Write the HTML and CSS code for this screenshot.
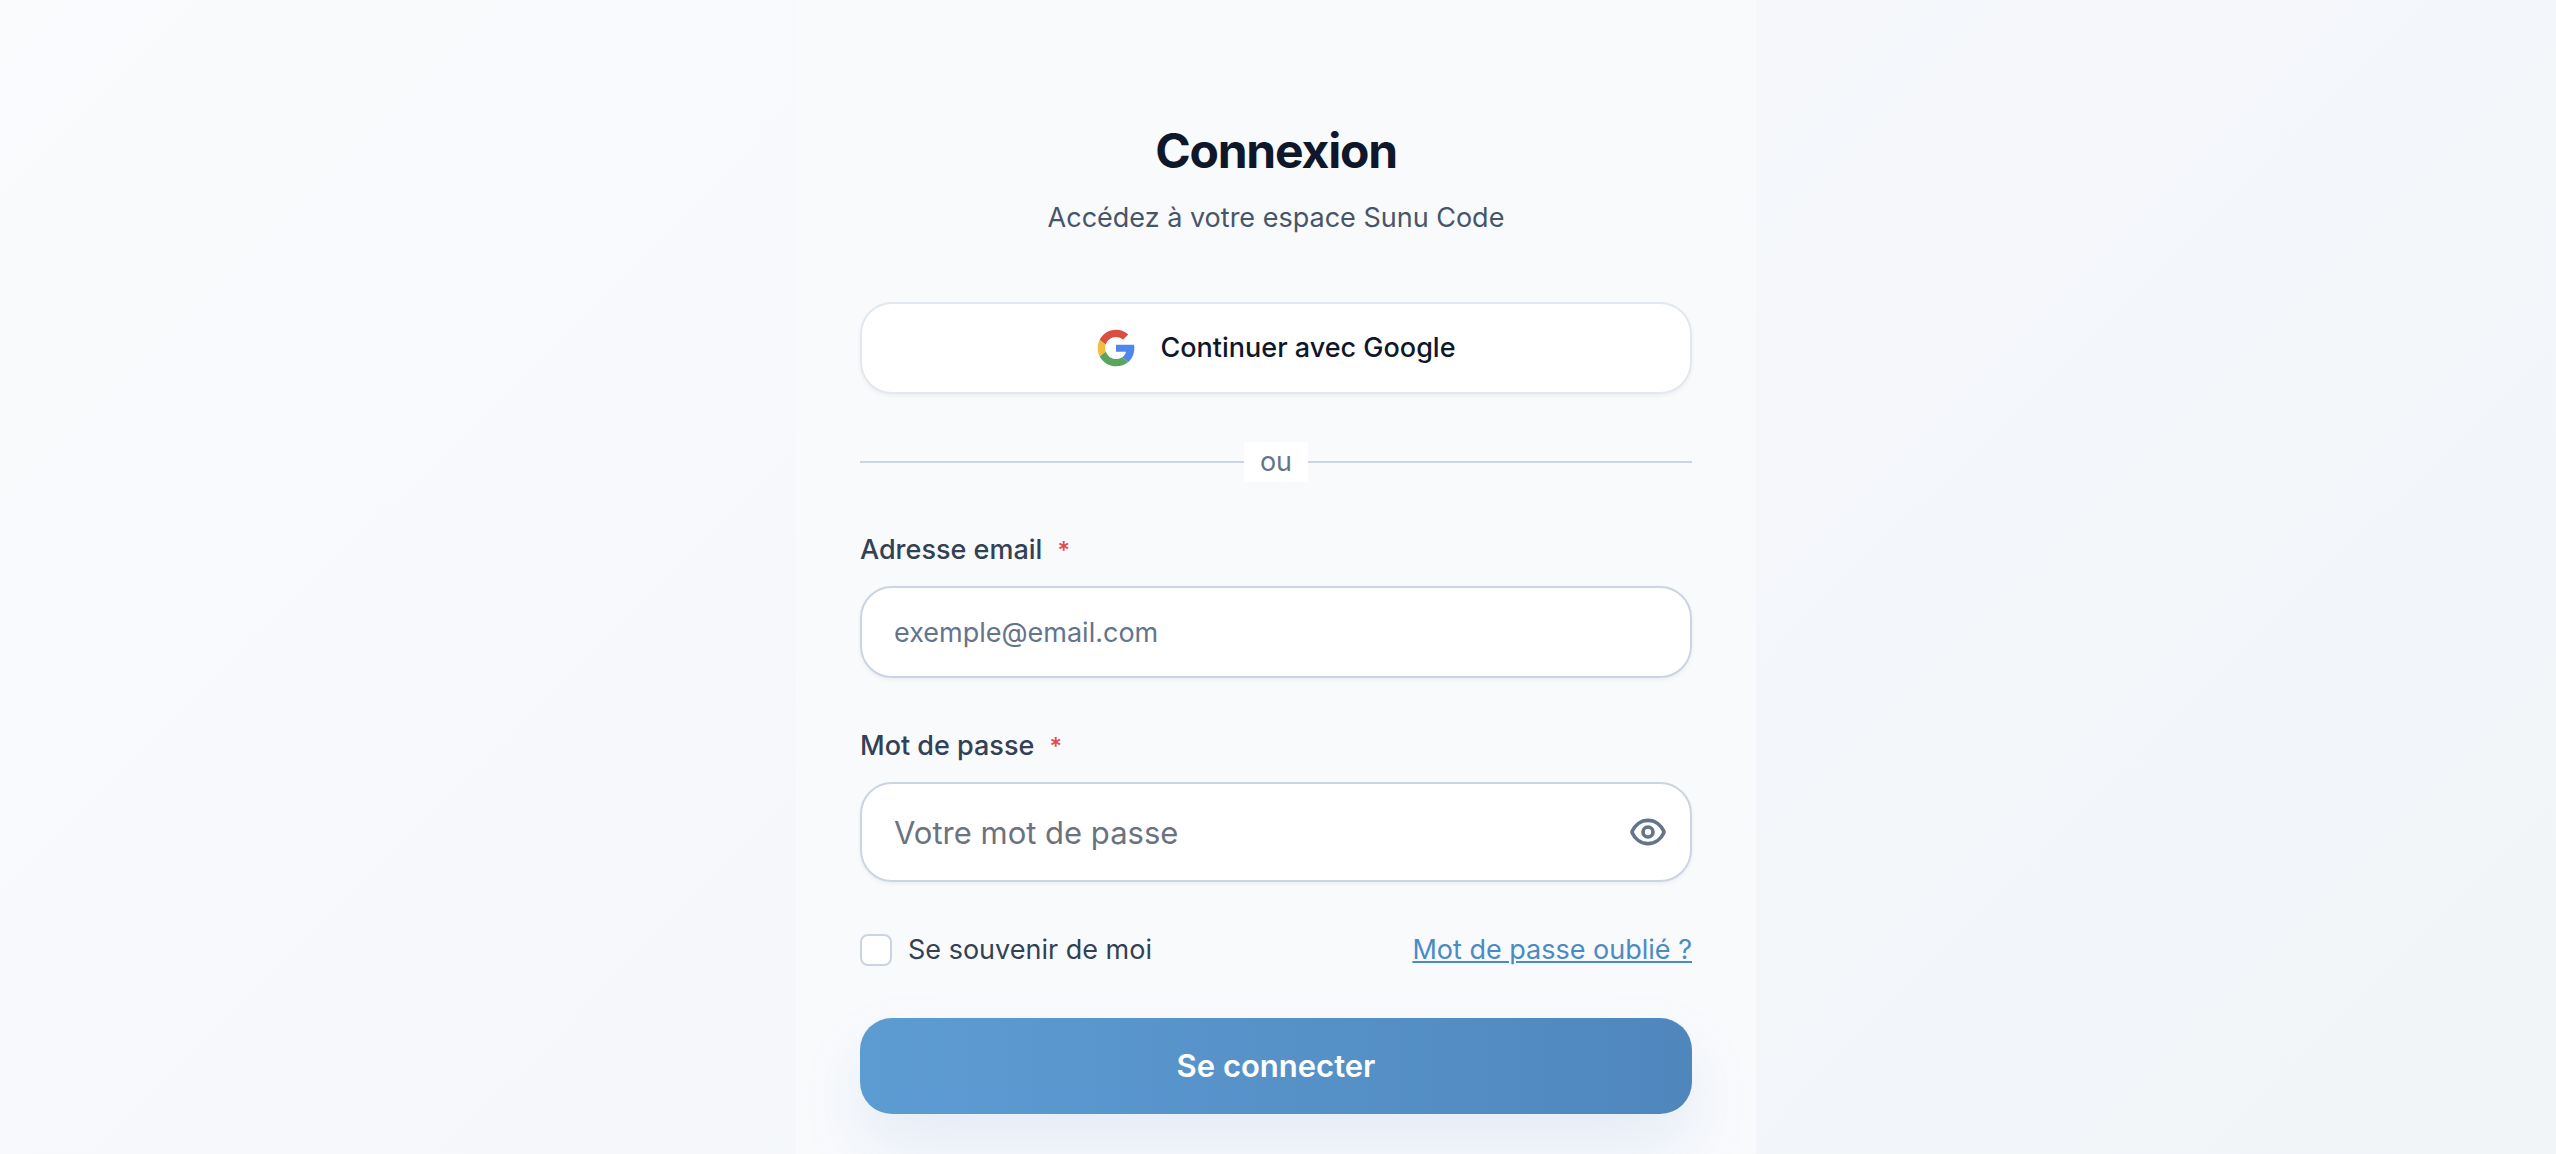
FILE: index.html
```html
<!DOCTYPE html>
<html lang="fr">
<head>
    <meta charset="UTF-8">
    <meta name="viewport" content="width=device-width, initial-scale=1.0">
    <title>Connexion - Sunu Code</title>
    <link rel="stylesheet" href="styles.css">
</head>
<body>
    <main class="login-page">
        <section class="login-panel">
            <header class="login-header">
                <h1>Connexion</h1>
                <p>Accédez à votre espace Sunu Code</p>
            </header>

            <button type="button" class="google-btn">
                <svg class="google-icon" viewBox="0 0 24 24" aria-hidden="true">
                    <path fill="#5087ec" d="M22.8 10c.1.6.2 1.3.2 2.1 0 3.4-1.3 6.3-3.6 8.3l-3.7-2.8c1.2-.8 2-1.9 2.3-3.3H12V10z"/>
                    <path fill="#58a55c" d="M12 23c2.97 0 5.46-.98 7.4-2.6l-3.69-2.83c-.98.66-2.23 1.06-3.71 1.06-2.86 0-5.29-1.93-6.16-4.53l-3.66 2.84C3.99 20.53 7.7 23 12 23z"/>
                    <path fill="#f2bd42" d="M5.84 14.09c-.22-.66-.35-1.36-.35-2.09s.13-1.43.35-2.09L2.18 7.07C1.43 8.55 1 10.22 1 12s.43 3.45 1.18 4.93l3.66-2.84z"/>
                    <path fill="#d95040" d="M12 5.38c1.62 0 3.06.56 4.21 1.64l3.15-3.15C17.45 2.09 14.97 1 12 1 7.7 1 3.99 3.47 2.18 7.07l3.66 2.84c.87-2.6 3.3-4.53 6.16-4.53z"/>
                </svg>
                Continuer avec Google
            </button>

            <div class="divider"><span>ou</span></div>

            <form class="login-form">
                <div class="field">
                    <label for="email">Adresse email <span class="required">*</span></label>
                    <input type="email" id="email" class="input" placeholder="exemple@email.com" required>
                </div>

                <div class="field">
                    <label for="password">Mot de passe <span class="required">*</span></label>
                    <div class="password-box">
                        <input type="password" id="password" class="input input-large" placeholder="Votre mot de passe" required>
                        <button type="button" class="toggle-password" aria-label="Afficher le mot de passe">
                            <svg viewBox="0 0 24 24" aria-hidden="true">
                                <path d="M2.5 12.4a1 1 0 0 1 0-.8C4.2 7.7 7.8 5 12 5s7.8 2.7 9.5 6.6a1 1 0 0 1 0 .8c-1.7 3.9-5.3 6.6-9.5 6.6s-7.8-2.7-9.5-6.6z"/>
                                <circle cx="12" cy="12" r="3"/>
                            </svg>
                        </button>
                    </div>
                </div>

                <div class="options">
                    <label class="remember" for="remember">
                        <input type="checkbox" id="remember">
                        Se souvenir de moi
                    </label>
                    <a href="#">Mot de passe oublié ?</a>
                </div>

                <button type="submit" class="submit-btn">Se connecter</button>
            </form>
        </section>
    </main>

    <script>
        // Show/hide the password
        document.querySelector('.toggle-password').addEventListener('click', function() {
            const input = document.getElementById('password');
            input.type = input.type === 'password' ? 'text' : 'password';
        });
    </script>
</body>
</html>
```

FILE: styles.css
```css
* {
    box-sizing: border-box;
}
body {
    margin: 0;
    font-family: Inter, "Liberation Sans", sans-serif;
    font-size: 27px;
    line-height: 40px;
    color: #0f172a;
}
.login-page {
    display: flex;
    justify-content: center;
    height: 100vh;
    overflow: hidden;
    padding-right: 4px;
    background: linear-gradient(135deg, #f9fbfd 0%, #f5f7fb 50%, #f1f5f8 100%);
}
.login-panel {
    width: 100%;
    max-width: 960px;
    min-height: 100%;
    flex-shrink: 0;
    padding: 119px 64px 64px;
    background: #f9fafc;
}
.login-header {
    margin-bottom: 64px;
    text-align: center;
}
.login-header h1 {
    margin: 0 0 15px;
    font-size: 48px;
    line-height: 64px;
    font-weight: 700;
    letter-spacing: -0.025em;
    color: #0f172a;
}
.login-header p {
    margin: 0;
    color: #475569;
}
button,
input {
    font: inherit;
}
.google-btn {
    display: flex;
    align-items: center;
    justify-content: center;
    gap: 24px;
    width: 100%;
    height: 92px;
    border: 2px solid #e2e8f0;
    border-radius: 32px;
    background: #fff;
    color: #0f172a;
    font-weight: 500;
    box-shadow: 0 2px 4px rgba(0, 0, 0, 0.05);
    cursor: pointer;
}
.google-icon {
    width: 40px;
    height: 40px;
}
.divider {
    display: flex;
    align-items: center;
    margin: 48px 0;
    color: #64748b;
}
.divider::before,
.divider::after {
    content: '';
    flex: 1;
    height: 2px;
    background: #cbd5e1;
}
.divider span {
    padding: 0 16px;
    background: #fff;
}
.field {
    margin-bottom: 48px;
}
.field label {
    display: block;
    margin-bottom: 15px;
    font-weight: 500;
    color: #334155;
}
.required {
    margin-left: 8px;
    font-size: 24px;
    color: #e5484d;
}
.input {
    display: block;
    width: 100%;
    height: 92px;
    padding: 0 32px;
    border: 2px solid #cbd5e1;
    border-radius: 32px;
    background: #fff;
    color: #0f172a;
    box-shadow: 0 2px 4px rgba(0, 0, 0, 0.05);
}
.input::placeholder {
    color: #64748b;
}
.input-large {
    height: 100px;
    padding-right: 96px;
    font-size: 31px;
}
.input-large::placeholder {
    color: #6b7280;
}
.password-box {
    position: relative;
}
.toggle-password {
    position: absolute;
    top: 0;
    right: 24px;
    display: flex;
    align-items: center;
    height: 100%;
    padding: 0;
    border: 0;
    background: none;
    color: #64748b;
    cursor: pointer;
}
.toggle-password svg {
    width: 40px;
    height: 40px;
    fill: none;
    stroke: currentColor;
    stroke-width: 2.2;
    stroke-linecap: round;
    stroke-linejoin: round;
}
.options {
    display: flex;
    align-items: center;
    justify-content: space-between;
    margin-bottom: 48px;
}
.remember {
    display: flex;
    align-items: center;
    gap: 16px;
    color: #334155;
}
.remember input {
    appearance: none;
    width: 32px;
    height: 32px;
    margin: 0;
    border: 2px solid #cbd5e1;
    border-radius: 8px;
    background: #fff;
}
.remember input:checked {
    background: #4f8bc4;
}
.options a {
    color: #4a8bc4;
}
.submit-btn {
    display: block;
    width: 100%;
    height: 96px;
    border: 0;
    border-radius: 32px;
    background: linear-gradient(90deg, #5d9cd3 0%, #4f87bd 100%);
    color: #fff;
    font-size: 31px;
    font-weight: 600;
    box-shadow: 0 32px 64px rgba(79, 143, 209, 0.12);
    cursor: pointer;
}
```
